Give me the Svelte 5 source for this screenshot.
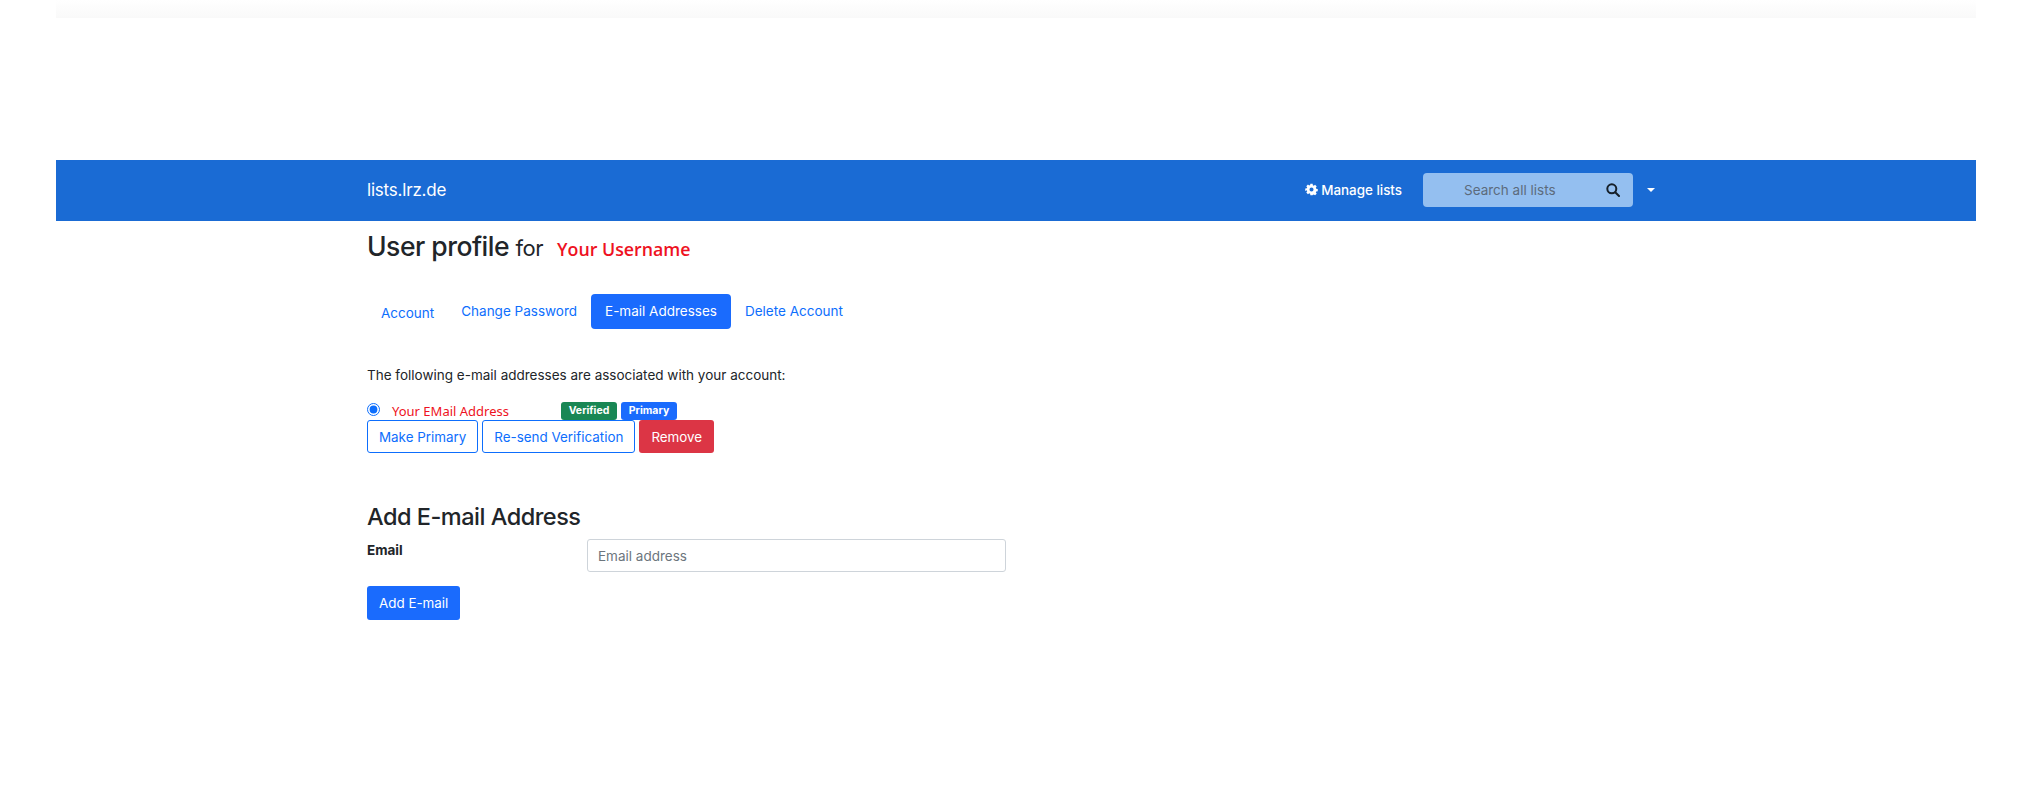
<script>
  let tabs = ['Account', 'Change Password', 'E-mail Addresses', 'Delete Account']
  let active = 'E-mail Addresses'
</script>

<div class="frame">
  <div class="topfade"></div>

  <nav class="navbar">
    <div class="navinner">
      <span class="brand">lists.lrz.de</span>
      <div class="navright">
        <span class="manage">
          <svg width="13" height="13" viewBox="0 0 16 16" fill="#fff"><path d="M9.4 1l.3 1.9c.4.1.8.3 1.100.5l1.600-1.100 2 2-1.100 1.600c.2.300.4.700.5 1.100l1.900.3v2.800l-1.900.3c-.1.400-.3.800-.5 1.100l1.100 1.600-2 2-1.600-1.100c-.3.200-.7.400-1.100.5L9.400 15H6.600l-.3-1.900c-.4-.1-.8-.3-1.100-.5l-1.600 1.100-2-2 1.100-1.600c-.2-.3-.4-.7-.5-1.100L.3 9.700V6.900l1.900-.3c.1-.4.300-.8.500-1.100L1.600 3.900l2-2 1.600 1.100c.3-.2.700-.4 1.100-.5L6.600 1zM8 5.500a2.500 2.500 0 1 0 0 5 2.500 2.500 0 0 0 0-5z"/></svg>
          Manage lists
        </span>
        <div class="search">
          <span class="searchtext">Search all lists</span>
          <svg class="searchicon" width="14" height="14" viewBox="0 0 14 14" fill="none" stroke="#16202a" stroke-width="2"><circle cx="5.800" cy="5.800" r="4.500"/><path d="M9.200 9.200L13 13" stroke-linecap="round"/></svg>
        </div>
        <span class="caret"></span>
      </div>
    </div>
  </nav>

  <main class="content">
    <div class="title">
      <h1>User profile <small>for</small></h1>
      <span class="username">Your Username</span>
    </div>

    <ul class="tabs">
      {#each tabs as t}
        <li class:active={t === active} class:first={t === 'Account'}>{t}</li>
      {/each}
    </ul>

    <p class="intro">The following e-mail addresses are associated with your account:</p>

    <div class="emailrow">
      <input type="radio" checked />
      <span class="address">Your EMail Address</span>
      <span class="badge green">Verified</span>
      <span class="badge blue">Primary</span>
    </div>
    <div class="actions">
      <button class="btn outline">Make Primary</button>
      <button class="btn outline">Re-send Verification</button>
      <button class="btn danger">Remove</button>
    </div>

    <h3>Add E-mail Address</h3>
    <div class="formrow">
      <label for="email">Email</label>
      <input id="email" class="field" type="text" placeholder="Email address" />
    </div>
    <button class="btn primary">Add E-mail</button>
  </main>
</div>

<style>
  :global(body) {
    background: #fff;
    color: #212529;
    font-family: Inter, "Liberation Sans", sans-serif;
    font-size: 13.500px;
  }

  .frame {
    padding: 0 56px;
    width: 1920px;
    min-height: 800px;
  }

  .topfade {
    height: 18px;
    background: linear-gradient(#fff, #f9f9f9);
  }

  .navbar {
    margin-top: 142px;
    height: 61px;
    background: #1a6bd4;
    color: #fff;
  }

  .navinner {
    display: flex;
    align-items: center;
    height: 59px;
    padding-left: 311px;
    width: 1288px;
  }

  .brand {
    font-size: 17px;
    letter-spacing: -0.2px;
  }

  .navright {
    margin-left: auto;
    display: flex;
    align-items: center;
  }

  .manage {
    display: flex;
    align-items: center;
    gap: 3px;
    font-size: 13.400px;
    font-weight: 500;
    margin-right: 21px;
  }

  .search {
    width: 210px;
    height: 34px;
    background: #94bff0;
    border-radius: 4px;
    display: flex;
    align-items: center;
    justify-content: space-between;
    padding: 0 13px 0 41px;
    box-sizing: border-box;
    color: #5c6b7c;
  }

  .caret {
    margin-left: 14px;
    border-top: 4.500px solid #fff;
    border-left: 4.500px solid transparent;
    border-right: 4.500px solid transparent;
  }

  .content {
    padding-left: 311px;
  }

  .title {
    display: flex;
    align-items: baseline;
    gap: 14px;
    height: 50px;
  }

  h1 {
    margin: 0;
    font-size: 26.500px;
    font-weight: 500;
    letter-spacing: -0.5px;
    line-height: 50px;
  }

  h1 small {
    font-size: 22px;
    font-weight: 400;
  }

  .username {
    font-family: "Open Sans", sans-serif;
    color: #ee1122;
    font-size: 17.800px;
    font-weight: 600;
  }

  .tabs {
    display: flex;
    list-style: none;
    margin: 23px 0 0;
    padding: 0;
    height: 35px;
  }

  .tabs li {
    padding: 0 14px;
    line-height: 35px;
    color: #0d6efd;
    border-radius: 4px;
  }

  .tabs li.first {
    padding-top: 2px;
    padding-right: 13px;
  }

  .tabs li.active {
    background: #1a6bfd;
    color: #fff;
  }

  .intro {
    margin: 36px 0 0;
    line-height: 21px;
  }

  .emailrow {
    display: flex;
    align-items: center;
    height: 18px;
    margin-top: 16px;
  }

  .emailrow input {
    margin: 0 0 3px;
    width: 13px;
    height: 13px;
    accent-color: #0d6efd;
  }

  .address {
    margin-left: 12px;
    width: 169px;
    font-family: "Noto Sans", sans-serif;
    font-size: 13px;
    color: #ee1122;
  }

  .badge {
    width: 56px;
    height: 18px;
    line-height: 18px;
    text-align: center;
    font-size: 10.500px;
    font-weight: 700;
    color: #fff;
    border-radius: 3px;
    margin-right: 4px;
  }

  .green {
    background: #198754;
  }

  .blue {
    background: #1a6bfd;
  }

  .actions {
    display: flex;
    gap: 4px;
  }

  .btn {
    font: inherit;
    font-size: 13.400px;
    height: 33px;
    padding: 0 11px;
    border-radius: 3px;
    border: 1px solid transparent;
    box-sizing: border-box;
  }

  .outline {
    background: #fff;
    border-color: #0d6efd;
    color: #0d6efd;
  }

  .danger {
    background: #dc3545;
    color: #fff;
  }

  .primary {
    background: #1a6bfd;
    color: #fff;
    margin-top: 14px;
    height: 34px;
  }

  h3 {
    margin: 49px 0 0;
    font-size: 23.500px;
    font-weight: 500;
    letter-spacing: -0.5px;
    line-height: 29px;
  }

  .formrow {
    display: flex;
    margin-top: 8px;
    align-items: flex-start;
  }

  label {
    width: 220px;
    font-weight: 700;
    line-height: 23px;
  }

  .field {
    width: 419px;
    height: 33px;
    box-sizing: border-box;
    border: 1px solid #ced4da;
    border-radius: 3px;
    padding: 0 10px;
    font: inherit;
  }

  .field::placeholder {
    color: #6c757d;
  }
</style>
